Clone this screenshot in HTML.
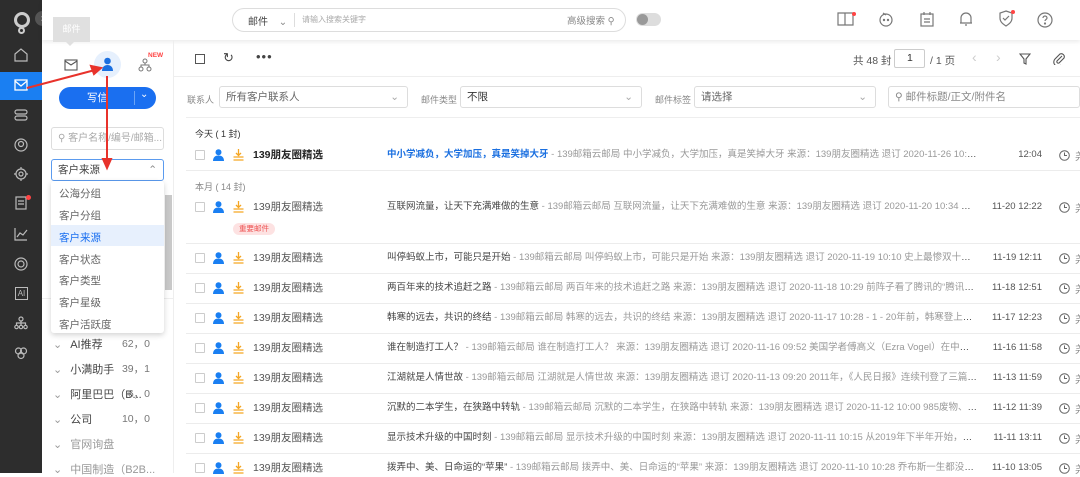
<!DOCTYPE html>
<html><head><meta charset="utf-8"><style>
*{margin:0;padding:0;box-sizing:border-box}
body{width:1080px;height:473px;overflow:hidden;background:#fff;font-family:"Liberation Sans","Noto Sans CJK SC",sans-serif;font-size:11px;color:#333;position:relative}
.a{position:absolute}
.nav{left:0;top:0;width:42px;height:473px;background:#2d2d2d}
.nav svg{position:absolute;left:14px}
.top{left:42px;top:0;width:1038px;height:40px;background:#fff;box-shadow:0 2px 4px rgba(0,0,0,.08)}
.sep{position:absolute;left:186px;width:894px;height:1px;background:#ececec}
.cb{position:absolute;left:195px;width:10px;height:10px;border:1px solid #ccc;border-radius:1px}
.sd{position:absolute;left:253px;color:#555;font-size:10.5px;line-height:14px}
.sub{position:absolute;left:387px;width:590px;white-space:nowrap;overflow:hidden;text-overflow:ellipsis;color:#444;font-size:9.5px;line-height:14px}
.sub i{font-style:normal;color:#999}
.dt{position:absolute;right:38px;color:#555;font-size:9.5px;line-height:14px}
.ck{position:absolute;left:1059px}
.mi{position:absolute;left:59px;color:#666;font-size:10.5px}
.gl{position:absolute;left:53px;color:#444;font-size:11px}
.gl b{font-weight:normal;color:#999;margin-right:8px}
.gn{position:absolute;right:930px;color:#777;font-size:10.5px}
</style></head><body>
<div class="a nav">
 <div class="a" style="left:14px;top:12px;width:16px;height:16px;border:3px solid #ccc;border-radius:50%"></div>
 <div class="a" style="left:18px;top:27px;width:7px;height:7px;border:2px solid #ccc;border-radius:50%"></div>
 <div class="a" style="left:0;top:72px;width:42px;height:28px;background:#1a7ff2"></div>
 <svg style="top:48px" width="14" height="14" viewBox="0 0 14 14" fill="none" stroke="#bbb" stroke-width="1.2"><path d="M1 6L7 1l6 5v7H1z"/></svg>
 <svg style="top:79px" width="14" height="12" viewBox="0 0 14 12" fill="none" stroke="#fff" stroke-width="1.3"><rect x="1" y="1" width="12" height="10"/><path d="M1 2l6 5 6-5"/></svg>
 <svg style="top:108px" width="14" height="14" viewBox="0 0 14 14" fill="none" stroke="#bbb" stroke-width="1.2"><rect x="1" y="2" width="12" height="4" rx="2"/><rect x="1" y="8" width="12" height="4" rx="2"/></svg>
 <svg style="top:138px" width="14" height="14" viewBox="0 0 14 14" fill="none" stroke="#bbb" stroke-width="1.2"><circle cx="7" cy="7" r="6"/><circle cx="7" cy="6" r="2.5"/></svg>
 <svg style="top:167px" width="14" height="14" viewBox="0 0 14 14" fill="none" stroke="#bbb" stroke-width="1.2"><circle cx="7" cy="7" r="5"/><circle cx="7" cy="7" r="2"/><path d="M7 0v2M7 12v2M0 7h2M12 7h2"/></svg>
 <svg style="top:196px" width="14" height="14" viewBox="0 0 14 14" fill="none" stroke="#bbb" stroke-width="1.2"><rect x="2" y="1" width="10" height="12"/><path d="M4 5h6M4 8h6"/></svg>
 <div class="a" style="left:26px;top:195px;width:5px;height:5px;background:#f44;border-radius:50%"></div>
 <svg style="top:227px" width="14" height="14" viewBox="0 0 14 14" fill="none" stroke="#bbb" stroke-width="1.2"><path d="M1 1v12h12M3 10l3-4 3 2 4-5"/></svg>
 <svg style="top:257px" width="14" height="14" viewBox="0 0 14 14" fill="none" stroke="#bbb" stroke-width="1.2"><circle cx="7" cy="7" r="6"/><circle cx="7" cy="7" r="3"/></svg>
 <div class="a" style="left:15px;top:287px;width:13px;height:13px;border:1px solid #bbb;color:#bbb;font-size:8px;line-height:11px;text-align:center">AI</div>
 <svg style="top:316px" width="14" height="14" viewBox="0 0 14 14" fill="none" stroke="#bbb" stroke-width="1.2"><circle cx="7" cy="3" r="2"/><circle cx="2.5" cy="11" r="1.7"/><circle cx="7" cy="11" r="1.7"/><circle cx="11.5" cy="11" r="1.7"/><path d="M7 5v4M2.5 9V7h9v2"/></svg>
 <svg style="top:346px" width="14" height="14" viewBox="0 0 14 14" fill="none" stroke="#bbb" stroke-width="1.2"><circle cx="4.5" cy="5" r="3"/><circle cx="9.5" cy="5" r="3"/><circle cx="7" cy="9.5" r="3"/></svg>
</div>
<div class="a" style="left:35px;top:11px;width:15px;height:15px;border-radius:50%;background:#555;color:#fff;font-size:10px;line-height:15px;text-align:center">›</div>
<div class="a top"></div>
<div class="a" style="left:53px;top:17px;width:37px;height:25px;background:#e0e0e0;color:#fff;font-size:9px;line-height:25px;text-align:center">邮件</div>
<div class="a" style="left:66px;top:42px;width:0;height:0;border-left:4px solid transparent;border-right:4px solid transparent;border-top:4px solid #e0e0e0"></div>
<!-- search -->
<div class="a" style="left:232px;top:8px;width:394px;height:24px;border:1px solid #ddd;border-radius:12px"></div>
<div class="a" style="left:248px;top:13px;font-size:10px;color:#444">邮件 <span style="margin-left:8px;color:#888">⌄</span></div>
<div class="a" style="left:294px;top:13px;width:1px;height:14px;background:#ddd"></div>
<div class="a" style="left:302px;top:14px;font-size:8px;color:#aaa">请输入搜索关键字</div>
<div class="a" style="left:567px;top:13px;font-size:9.5px;color:#888">高级搜索 ⚲</div>
<div class="a" style="left:636px;top:13px;width:25px;height:13px;border-radius:7px;background:#ddd"></div>
<div class="a" style="left:637px;top:14px;width:11px;height:11px;border-radius:50%;background:#999"></div>
<!-- top right icons -->
<svg class="a" style="left:837px;top:11px" width="18" height="16" viewBox="0 0 18 16" fill="none" stroke="#777" stroke-width="1.2"><path d="M1 2h7v12H1zM8 2h8v12H8"/></svg>
<div class="a" style="left:852px;top:12px;width:4px;height:4px;background:#f44;border-radius:50%"></div>
<svg class="a" style="left:878px;top:11px" width="16" height="16" viewBox="0 0 16 16" fill="none" stroke="#777" stroke-width="1.2"><circle cx="8" cy="9" r="6"/><path d="M5 2l3 2"/><circle cx="6" cy="9" r=".6"/><circle cx="10" cy="9" r=".6"/></svg>
<svg class="a" style="left:919px;top:11px" width="16" height="16" viewBox="0 0 16 16" fill="none" stroke="#777" stroke-width="1.2"><rect x="2" y="3" width="12" height="12"/><path d="M5 1v3M11 1v3M5 8h6M5 11h6"/></svg>
<svg class="a" style="left:958px;top:10px" width="16" height="17" viewBox="0 0 16 17" fill="none" stroke="#777" stroke-width="1.2"><path d="M3 13V8a5 5 0 0110 0v5zM2 13h12M7 15h2"/></svg>
<svg class="a" style="left:998px;top:10px" width="16" height="17" viewBox="0 0 16 17" fill="none" stroke="#777" stroke-width="1.2"><path d="M8 1l6 2v5c0 4-3 6-6 8-3-2-6-4-6-8V3z"/><path d="M5 8l2 2 4-4"/></svg>
<div class="a" style="left:1011px;top:10px;width:4px;height:4px;background:#f44;border-radius:50%"></div>
<svg class="a" style="left:1037px;top:12px" width="16" height="16" viewBox="0 0 16 16" fill="none" stroke="#777" stroke-width="1.2"><circle cx="8" cy="8" r="7"/><path d="M6 6a2 2 0 114 0c0 1.5-2 1.5-2 3"/><circle cx="8" cy="11.5" r=".5"/></svg>
<!-- left panel -->
<div class="a" style="left:173px;top:40px;width:1px;height:433px;background:#eee"></div>
<svg class="a" style="left:64px;top:59px" width="14" height="12" viewBox="0 0 14 12" fill="none" stroke="#555" stroke-width="1.1"><rect x="1" y="1" width="12" height="10"/><path d="M1 2l6 4 6-4"/></svg>
<div class="a" style="left:94px;top:51px;width:27px;height:27px;border-radius:50%;background:#e6f0fd"></div>
<svg class="a" style="left:101px;top:57px" width="13" height="14" viewBox="0 0 13 14"><circle cx="6.5" cy="4" r="3.3" fill="#1a6fe0"/><path d="M1 14c0-4 2.5-6 5.5-6s5.5 2 5.5 6z" fill="#1a6fe0"/></svg>
<svg class="a" style="left:138px;top:58px" width="14" height="14" viewBox="0 0 14 14" fill="none" stroke="#777" stroke-width="1"><circle cx="7" cy="3" r="2"/><circle cx="3" cy="11" r="2"/><circle cx="11" cy="11" r="2"/><path d="M7 5v2M3 9V7h8v2"/></svg>
<div class="a" style="left:148px;top:52px;color:#f44;font-size:6.5px;font-weight:bold">NEW</div>
<div class="a" style="left:59px;top:87px;width:97px;height:22px;border-radius:11px;background:#1a6ff0;color:#fff;font-size:10.5px;line-height:22px;padding-left:28px">写信</div>
<div class="a" style="left:134px;top:91px;width:1px;height:14px;background:#6aa4f6"></div>
<div class="a" style="left:140px;top:89px;color:#fff;font-size:10px">⌄</div>
<div class="a" style="left:51px;top:127px;width:113px;height:23px;border:1px solid #ddd;border-radius:3px;color:#aaa;font-size:10px;line-height:21px;padding-left:6px;white-space:nowrap;overflow:hidden">⚲ 客户名称/编号/邮箱...</div>
<div class="a" style="left:51px;top:159px;width:113px;height:22px;border:1px solid #5b9bef;border-radius:3px;color:#444;font-size:10.5px;line-height:20px;padding-left:6px">客户来源<span style="position:absolute;right:6px;color:#888">⌃</span></div>
<div class="a" style="left:165px;top:195px;width:7px;height:95px;background:#c9c9c9"></div>
<div class="a" style="left:42px;top:298px;width:131px;height:1px;background:#eee"></div>
<div class="a" style="left:51px;top:181px;width:113px;height:152px;background:#fff;box-shadow:0 2px 6px rgba(0,0,0,.18);border-radius:3px"></div>
<div class="a" style="left:51px;top:225px;width:113px;height:21px;background:#e7f0fd"></div>
<div class="mi" style="top:186px">公海分组</div>
<div class="mi" style="top:208px">客户分组</div>
<div class="mi" style="top:230px;color:#1a6ff0">客户来源</div>
<div class="mi" style="top:252px">客户状态</div>
<div class="mi" style="top:273px">客户类型</div>
<div class="mi" style="top:295px">客户星级</div>
<div class="mi" style="top:317px">客户活跃度</div>
<div class="gl" style="top:336px"><b>⌄</b>AI推荐</div><div class="gn" style="top:336px">62，0</div>
<div class="gl" style="top:361px"><b>⌄</b>小满助手</div><div class="gn" style="top:361px">39，1</div>
<div class="gl" style="top:386px"><b>⌄</b>阿里巴巴（B...</div><div class="gn" style="top:386px">6，0</div>
<div class="gl" style="top:411px"><b>⌄</b>公司</div><div class="gn" style="top:411px">10，0</div>
<div class="gl" style="top:436px;color:#999"><b>⌄</b>官网询盘</div>
<div class="gl" style="top:461px;color:#999"><b>⌄</b>中国制造（B2B...</div>
<!-- toolbar -->
<div class="a" style="left:195px;top:54px;width:10px;height:10px;border:1px solid #555"></div>
<div class="a" style="left:223px;top:50px;font-size:13px;color:#444">↻</div>
<div class="a" style="left:256px;top:49px;font-size:13px;color:#444;letter-spacing:1px">•••</div>
<div class="a" style="left:174px;top:76px;width:906px;height:1px;background:#eee"></div>
<div class="a" style="left:853px;top:53px;font-size:10.5px;color:#555">共 48 封</div>
<div class="a" style="left:894px;top:49px;width:31px;height:19px;border:1px solid #ccc;border-radius:2px;font-size:10.5px;line-height:17px;padding-left:12px">1</div>
<div class="a" style="left:930px;top:53px;font-size:10.5px;color:#555">/ 1 页</div>
<div class="a" style="left:972px;top:49px;font-size:14px;color:#ccc">‹</div>
<div class="a" style="left:996px;top:49px;font-size:14px;color:#ccc">›</div>
<svg class="a" style="left:1019px;top:53px" width="12" height="12" viewBox="0 0 12 12" fill="none" stroke="#555" stroke-width="1.1"><path d="M1 1h10L7 6v5L5 10V6z"/></svg>
<svg class="a" style="left:1053px;top:52px" width="12" height="13" viewBox="0 0 12 13" fill="none" stroke="#555" stroke-width="1.1"><path d="M9 4L4 9a1.5 1.5 0 002 2l5-5a3 3 0 00-4-4L2 7a4 4 0 006 6"/></svg>
<!-- filters -->
<div class="a" style="left:187px;top:93px;font-size:9px;color:#888">联系人</div>
<div class="a" style="left:219px;top:86px;width:189px;height:22px;border:1px solid #ddd;border-radius:3px;font-size:10.5px;color:#666;line-height:20px;padding-left:6px">所有客户联系人<span style="position:absolute;right:8px;color:#aaa">⌄</span></div>
<div class="a" style="left:421px;top:93px;font-size:9px;color:#888">邮件类型</div>
<div class="a" style="left:460px;top:86px;width:182px;height:22px;border:1px solid #ddd;border-radius:3px;font-size:10.5px;color:#333;line-height:20px;padding-left:6px">不限<span style="position:absolute;right:8px;color:#aaa">⌄</span></div>
<div class="a" style="left:655px;top:93px;font-size:9px;color:#888">邮件标签</div>
<div class="a" style="left:694px;top:86px;width:182px;height:22px;border:1px solid #ddd;border-radius:3px;font-size:10.5px;color:#666;line-height:20px;padding-left:6px">请选择<span style="position:absolute;right:8px;color:#aaa">⌄</span></div>
<div class="a" style="left:888px;top:86px;width:192px;height:22px;border:1px solid #ddd;border-radius:3px;font-size:10.5px;color:#888;line-height:20px;padding-left:6px">⚲ 邮件标题/正文/附件名</div>
<div class="a" style="left:186px;top:117px;width:894px;height:1px;background:#eee"></div>
<!-- list -->
<div class="a" style="left:195px;top:127px;font-size:9px;color:#333">今天 ( 1 封)</div>
<div class="a" style="left:195px;top:180px;font-size:9px;color:#888">本月 ( 14 封)</div>
<div class="a" style="left:233px;top:223px;width:42px;height:12px;border-radius:6px;background:#fde2e2;color:#e55;font-size:7.5px;line-height:12px;text-align:center">重要邮件</div>
<div id="L"></div>
<script>
var R=[[155,'139朋友圈精选','<b style="color:#1a6fe0">中小学减负，大学加压，真是笑掉大牙</b> <i>- 139邮箱云邮局 中小学减负，大学加压，真是笑掉大牙 来源：139朋友圈精选 退订 2020-11-26 10:24 - 1 - 最...</i>','12:04',1],
[207,'139朋友圈精选','互联网流量，让天下充满难做的生意 <i>- 139邮箱云邮局 互联网流量，让天下充满难做的生意 来源：139朋友圈精选 退订 2020-11-20 10:34 阿里...</i>','11-20 12:22'],
[258,'139朋友圈精选','叫停蚂蚁上市，可能只是开始 <i>- 139邮箱云邮局 叫停蚂蚁上市，可能只是开始 来源：139朋友圈精选 退订 2020-11-19 10:10 史上最惨双十一。...</i>','11-19 12:11'],
[288,'139朋友圈精选','两百年来的技术追赶之路 <i>- 139邮箱云邮局 两百年来的技术追赶之路 来源：139朋友圈精选 退订 2020-11-18 10:29 前阵子看了腾讯的“腾讯科学...</i>','11-18 12:51'],
[318,'139朋友圈精选','韩寒的远去，共识的终结 <i>- 139邮箱云邮局 韩寒的远去，共识的终结 来源：139朋友圈精选 退订 2020-11-17 10:28 - 1 - 20年前，韩寒登上央视...</i>','11-17 12:23'],
[348,'139朋友圈精选','谁在制造打工人？ <i>- 139邮箱云邮局 谁在制造打工人？ 来源：139朋友圈精选 退订 2020-11-16 09:52 美国学者傅高义（Ezra Vogel）在中国名声...</i>','11-16 11:58'],
[378,'139朋友圈精选','江湖就是人情世故 <i>- 139邮箱云邮局 江湖就是人情世故 来源：139朋友圈精选 退订 2020-11-13 09:20 2011年，《人民日报》连续刊登了三篇关...</i>','11-13 11:59'],
[408,'139朋友圈精选','沉默的二本学生，在狭路中转轨 <i>- 139邮箱云邮局 沉默的二本学生，在狭路中转轨 来源：139朋友圈精选 退订 2020-11-12 10:00 985废物、小镇...</i>','11-12 11:39'],
[438,'139朋友圈精选','显示技术升级的中国时刻 <i>- 139邮箱云邮局 显示技术升级的中国时刻 来源：139朋友圈精选 退订 2020-11-11 10:15 从2019年下半年开始，韩国...</i>','11-11 13:11'],
[468,'139朋友圈精选','拨弄中、美、日命运的“苹果” <i>- 139邮箱云邮局 拨弄中、美、日命运的“苹果” 来源：139朋友圈精选 退订 2020-11-10 10:28 乔布斯一生都没有来...</i>','11-10 13:05']];
var h='',seps=[170,243,273,303,333,363,393,423,453];
seps.forEach(function(y){h+='<div class="sep" style="top:'+y+'px"></div>'});
R.forEach(function(r){var t=r[0]-7;
h+='<div class="cb" style="top:'+(r[0]-5)+'px"></div>';
h+='<svg class="a" style="left:213px;top:'+(r[0]-6)+'px" width="11" height="12" viewBox="0 0 11 12"><circle cx="5.5" cy="3.2" r="3" fill="#1a7ff2"/><path d="M0 12c0-4 2.5-5.5 5.5-5.5S11 8 11 12z" fill="#1a7ff2"/></svg>';
h+='<svg class="a" style="left:233px;top:'+(r[0]-6)+'px" width="11" height="12" viewBox="0 0 11 12" fill="none" stroke="#f5a623" stroke-width="1.3"><path d="M5.5 0v6M3 4l2.5 2.5L8 4M0.5 8h10M0.5 11h10"/></svg>';
h+='<div class="sd" style="top:'+t+'px;'+(r[4]?'color:#222;font-weight:bold':'')+'">'+r[1]+'</div>';
h+='<div class="sub" style="top:'+t+'px">'+r[2]+'</div>';
h+='<div class="dt" style="top:'+t+'px">'+r[3]+'</div>';
h+='<svg class="ck" style="top:'+(r[0]-5)+'px" width="11" height="11" viewBox="0 0 11 11" fill="none" stroke="#666" stroke-width="1"><circle cx="5.5" cy="5.5" r="4.8"/><path d="M5.5 2.5v3h2.5"/></svg>';
h+='<div class="a" style="left:1075px;top:'+t+'px;color:#888;font-size:10px">尧</div>';});
document.getElementById('L').innerHTML=h;
</script>
<!-- red arrows -->
<svg class="a" style="left:0;top:0" width="180" height="280" viewBox="0 0 180 280">
<g stroke="#e8322b" stroke-width="2" fill="#e8322b">
<line x1="27" y1="88" x2="95" y2="70"/><path d="M101 68l-10-2 3 8z"/>
<line x1="107" y1="76" x2="107" y2="160"/><path d="M107 168l-4-9h8z"/>
</g></svg>
</body></html>
